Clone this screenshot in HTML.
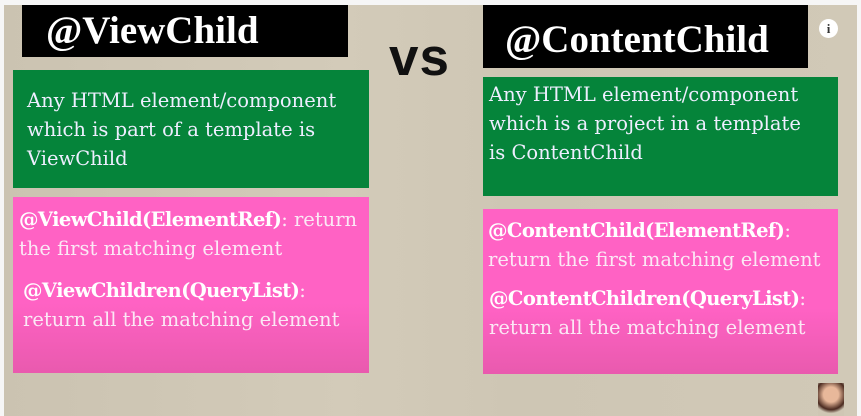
<!DOCTYPE html>
<html><head><meta charset="utf-8"><style>
body{margin:0;width:861px;height:416px;overflow:hidden;background:#f6f6f6;position:relative;font-family:"DejaVu Serif","Liberation Serif",serif}
.bg{position:absolute;left:4px;top:5px;width:853px;height:411px;background:linear-gradient(90deg,#cbc3b1,#d3cbb9 40%,#cec6b4 60%,#d1c9b7)}
.b{position:absolute;box-sizing:border-box}
.blk{background:#000;color:#fff;font-family:"Liberation Serif",serif;font-weight:bold;font-size:39px;line-height:1}
.grn{background:#05843a;color:#eef;font-size:19.5px;line-height:29px;padding:16px 0 0 14px;white-space:nowrap}
.pnk{background:linear-gradient(#ff62c4,#ff62c4 60%,#e95aae);color:#fbe8f5;font-size:19.5px;line-height:29px;white-space:nowrap}
.pnk b{color:#fff;letter-spacing:-0.6px}
</style></head><body>
<div class="bg"></div>
<div class="b blk" style="left:22px;top:5px;width:326px;height:52px;padding:6px 0 0 24px">@ViewChild</div>
<div class="b" style="left:389px;top:27px;font-family:'Liberation Sans',sans-serif;font-weight:900;font-size:53px;color:#111;letter-spacing:1px">vs</div>
<div class="b blk" style="left:483px;top:5px;width:325px;height:63px;padding:15px 0 0 22px">@ContentChild</div>
<div style="position:absolute;left:819px;top:19px;width:19px;height:19px;border-radius:50%;background:#fff;color:#333;font:bold 13px 'Liberation Serif',serif;text-align:center;line-height:19px">i</div>
<div class="b grn" style="left:13px;top:70px;width:356px;height:118px">Any HTML element/component<br>which is part of a template is<br>ViewChild</div>
<div class="b grn" style="left:483px;top:77px;width:355px;height:119px;padding:3px 0 0 6px">Any HTML element/component<br>which is a project in a template<br>is ContentChild</div>
<div class="b pnk" style="left:13px;top:197px;width:356px;height:176px;padding:8px 0 0 6px"><b>@ViewChild(ElementRef)</b>: return<br>the first matching element<div style="margin:13px 0 0 4px"><b>@ViewChildren(QueryList)</b>:<br>return all the matching element</div></div>
<div class="b pnk" style="left:483px;top:209px;width:355px;height:165px;padding:7px 0 0 5px"><b>@ContentChild(ElementRef)</b>:<br>return the first matching element<div style="margin:10px 0 0 1px"><b>@ContentChildren(QueryList)</b>:<br>return all the matching element</div></div>
<div style="position:absolute;left:818px;top:383px;width:26px;height:33px;background:radial-gradient(circle at 50% 35%,#e8b89a 30%,#4a2a20 60%,#cfc6b4 75%)"></div>
</body></html>
